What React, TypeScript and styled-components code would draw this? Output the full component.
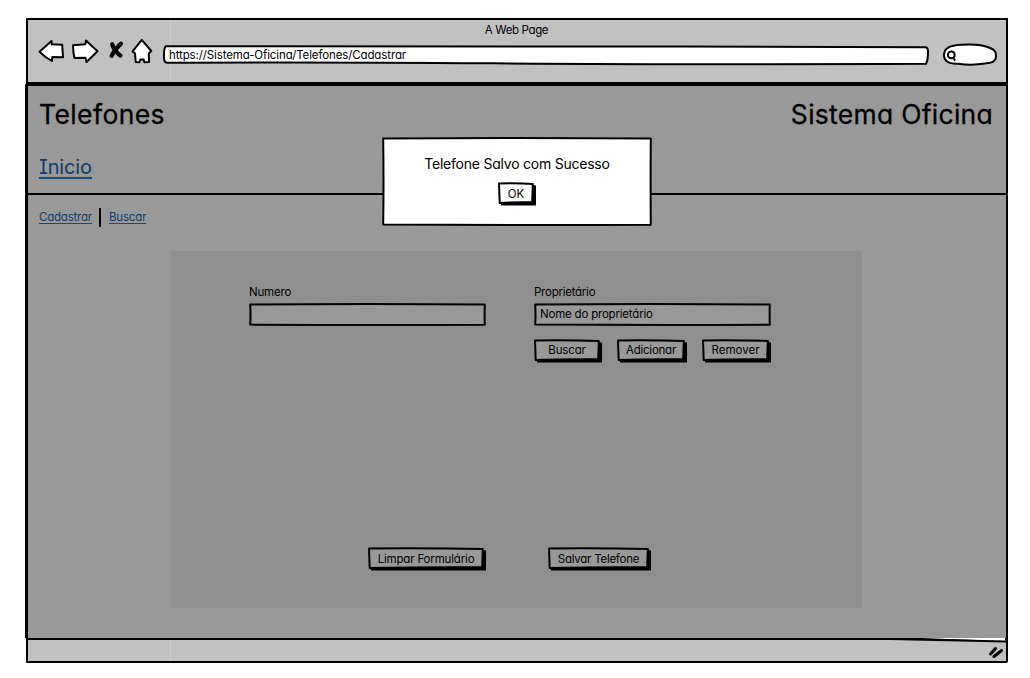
import React from "react";
import styled, { createGlobalStyle } from "styled-components";

const GlobalStyle = createGlobalStyle`
  * { box-sizing: border-box; }
  body { margin: 0; background: #fff; }
  button, input { font: inherit; color: inherit; letter-spacing: inherit; }
`;

const Stage = styled.div`
  width: 1030px;
  height: 678px;
  padding: 18px 22px 15px 25px;
  overflow: hidden;
  background: #fff;
  color: #000;
  font: 400 12px/16px Inter, "Liberation Sans", sans-serif;
  font-feature-settings: "cv11" 1, "cv08" 0;
`;

const Browser = styled.div`
  position: relative;
  display: flex;
  flex-direction: column;
  height: 645px;
`;

const Chrome = styled.header`
  flex: none;
  height: 66px;
  margin: 0 0 0 1px;
  border: 2px solid #000;
  background: linear-gradient(90deg, transparent 142px, #cdcdcd 142px, #cdcdcd 143px, transparent 143px), #c1c1c1;
`;

const WindowTitle = styled.div`
  height: 18px;
  padding-top: 2px;
  padding-right: 1px;
  text-align: center;
  font-size: 11.5px;
  letter-spacing: -0.36px;
`;

const Toolbar = styled.div`
  display: flex;
  align-items: flex-start;
  padding-left: 9px;
`;

const NavIcons = styled.svg`
  flex: none;
  width: 118px;
  height: 32px;
`;

const AddressBar = styled.div`
  position: relative;
  flex: none;
  width: 767px;
  height: 21px;
  margin: 7px 12px 0 8px;
  padding: 2px 6px;
  font-size: 11.5px;
  letter-spacing: -0.12px;
  white-space: nowrap;
`;

const SearchIcon = styled.svg`
  flex: none;
  width: 56px;
  height: 25px;
  margin-top: 4px;
`;

const FrameSvg = styled.svg`
  position: absolute;
  inset: 0;
  width: 100%;
  height: 100%;
  overflow: visible;
`;

const FrameContent = styled.span`
  position: relative;
`;

const Hero = styled.section`
  flex: none;
  height: 111px;
  border: 2px solid #000;
  border-left-width: 3px;
  border-radius: 1px;
  background: #999;
  padding: 12px 13px 0 11px;
`;

const TitleRow = styled.div`
  display: flex;
  justify-content: space-between;
`;

const Title = styled.h1<{ $spacing: number }>`
  margin: 0;
  font-weight: 400;
  font-size: 26.5px;
  line-height: 32px;
  letter-spacing: ${(p) => p.$spacing}px;
  -webkit-text-stroke: 0.3px #000;
`;

const HomeLink = styled.a`
  display: inline-block;
  margin-top: 24px;
  border-bottom: 2px solid #174a78;
  color: #0d3c69;
  font-size: 20px;
  line-height: 26px;
  height: 25px;
  letter-spacing: -0.15px;
  font-feature-settings: "cv11" 1, "cv08" 1;
`;

const Body = styled.main`
  flex: 1;
  padding: 13px 0 0 11px;
  border: solid #000;
  border-width: 0 2px 0 3px;
  background: #999;
`;

const SubNav = styled.nav`
  display: flex;
  height: 19px;
`;

const SubLink = styled.a<{ $spacing: number }>`
  height: 15px;
  margin-top: 1px;
  border-bottom: 1px solid #174a78;
  color: #0d3c69;
  font-size: 11.5px;
  letter-spacing: ${(p) => p.$spacing}px;
`;

const Divider = styled.span`
  width: 2px;
  height: 19px;
  margin: 0 8px 0 7px;
  background: #000;
`;

const Form = styled.form`
  display: flex;
  flex-direction: column;
  justify-content: space-between;
  width: 691px;
  height: 357px;
  margin: 24px 0 0 132px;
  padding: 33px 91px 37px 78px;
  background: #8f8f8f;
`;

const Fields = styled.div`
  display: grid;
  grid-template-columns: 237px 237px;
  column-gap: 48px;
`;

const FieldLabel = styled.label<{ $spacing: number }>`
  display: block;
  height: 19px;
  font-size: 11.5px;
  letter-spacing: ${(p) => p.$spacing}px;
`;

const FieldBox = styled.div`
  position: relative;
  height: 23px;
  padding: 3px 6px;
  font-size: 11.5px;
  letter-spacing: -0.2px;
`;

const ButtonRow = styled.div`
  display: flex;
  gap: 15px;
  margin-top: 13px;
`;

const Actions = styled.div`
  display: flex;
  gap: 62px;
  padding-left: 119px;
`;

const SketchButton = styled.button<{ $width: number; $spacing: number; $drop: number }>`
  position: relative;
  flex: none;
  width: ${(p) => p.$width}px;
  height: 24px;
  padding: ${(p) => p.$drop}px 2px ${(p) => 3 - p.$drop}px 0;
  border: 0;
  background: transparent;
  font-size: 11.5px;
  line-height: 18px;
  letter-spacing: ${(p) => p.$spacing}px;
  white-space: nowrap;
`;

const Footer = styled.footer`
  position: relative;
  flex: none;
  height: 25px;
  margin-left: 1px;
  border: 2px solid #000;
  border-radius: 0 0 2px 1px;
  background: linear-gradient(90deg, transparent 142px, #cdcdcd 142px, #cdcdcd 143px, transparent 143px), #c1c1c1;
`;

const FooterSketch = styled.svg`
  position: absolute;
  right: -2px;
  top: -3px;
  width: 180px;
  height: 24px;
`;

const Dialog = styled.div`
  position: absolute;
  left: 357px;
  top: 119px;
  width: 270px;
  height: 89px;
  display: flex;
  flex-direction: column;
  align-items: center;
  padding-top: 17px;
`;

const Message = styled.p`
  position: relative;
  margin: 0 0 9px;
  font-size: 14px;
  line-height: 19px;
  letter-spacing: -0.23px;
  white-space: nowrap;
`;

function Frame({ w, h, fill }: { w: number; h: number; fill: string }) {
  return (
    <FrameSvg viewBox={`0 0 ${w} ${h}`} aria-hidden="true">
      <path
        d={`M1.2 1.6 Q${w * 0.5} .6 ${w - 1.2} 1.6 Q${w - 1.6} ${h * 0.5} ${w - 1.2} ${h - 1.2} Q${w * 0.5} ${h - 0.6} 1.2 ${h - 1.4} Q1.8 ${h * 0.5} 1.2 1.6Z`}
        fill={fill}
        stroke="#000"
        strokeWidth="2"
        strokeLinejoin="round"
      />
    </FrameSvg>
  );
}

interface PushButtonProps {
  width: number;
  spacing?: number;
  drop?: number;
  fill?: string;
  children: React.ReactNode;
}

function PushButton({ width: w, spacing = 0, drop = 0, fill = "#999", children }: PushButtonProps) {
  return (
    <SketchButton type="button" $width={w} $spacing={spacing} $drop={drop}>
      <FrameSvg viewBox={`0 0 ${w} 24`} aria-hidden="true">
        <path d={`M3 20H${w - 4}L${w - 3.5} 3L${w} 3.5V23.5H3Z`} />
        <path
          d={`M1 1.4Q${w / 2} .9 ${w - 3.2} 1.9L${w - 3.8} 20.3Q${w / 2} 19.8 1.7 21Z`}
          fill={fill}
          stroke="#000"
          strokeWidth="2"
          strokeLinejoin="round"
        />
      </FrameSvg>
      <FrameContent>{children}</FrameContent>
    </SketchButton>
  );
}

export default function App() {
  return (
    <>
      <GlobalStyle />
      <Stage>
        <Browser>
          <Chrome>
            <WindowTitle>A Web Page</WindowTitle>
            <Toolbar>
              <NavIcons viewBox="37 38 118 32" fill="#fff" stroke="#000" strokeWidth="2" strokeLinejoin="round">
                <path d="M39.5 51.8 51.5 41 51.8 44.3 62.2 44.7 63 57.3 52.3 57 52 61 45.5 57Z" />
                <path d="M73 45.3 85.3 44.3 86 40.5 97.5 51.3 86.5 62 85.5 57.8 74.5 58 73.5 53Z" />
                <g fill="none" strokeWidth="4.2" strokeLinecap="round">
                  <path d="M112.2 44.2Q114 51 120.4 55.5" />
                  <path d="M121 43.7Q116 48 111.6 55.8" />
                </g>
                <path d="M141.8 39.8 151.3 51 148.8 53.4 149 62 144.4 62.3 143.6 59.6 140.2 59.6 139.5 62.3 135.7 62 135 53.4 132.5 51.4Z" />
              </NavIcons>
              <AddressBar>
                <FrameSvg viewBox="0 0 767 21" aria-hidden="true">
                  <path
                    d="M3 1.2Q280 .8 520 1.5T763 2.2Q765.5 3 765 9Q765 15 763 18.8Q520 19.7 330 18.3T4 17.8Q.5 17.5 1 10Q1 2 3 1.2Z"
                    fill="#fff"
                    stroke="#000"
                    strokeWidth="2"
                  />
                </FrameSvg>
                <FrameContent>https://Sistema-Oficina/Telefones/Cadastrar</FrameContent>
              </AddressBar>
              <SearchIcon viewBox="942 42 56 25" fill="none" stroke="#000" strokeWidth="2">
                <path
                  fill="#fff"
                  d="M944 56C943.5 47 951 45.5 961 44.8C971 44 982 44.5 989 47.5C996 50 996 53 996 56C996 62 991 63 985 63.5C976 65 967 65 958 63.7C950 64 944.5 62 944 56Z"
                />
                <circle cx="951.3" cy="54.9" r="3.4" />
                <path d="m953 57.5 2.2 3.1" />
              </SearchIcon>
            </Toolbar>
          </Chrome>

          <Hero>
            <TitleRow>
              <Title $spacing={0.4}>Telefones</Title>
              <Title $spacing={0.27}>Sistema Oficina</Title>
            </TitleRow>
            <HomeLink>Inicio</HomeLink>
          </Hero>

          <Body>
            <SubNav>
              <SubLink $spacing={-0.22}>Cadastrar</SubLink>
              <Divider />
              <SubLink $spacing={-0.15}>Buscar</SubLink>
            </SubNav>
            <Form>
              <Fields>
                <div>
                  <FieldLabel $spacing={-0.2}>Numero</FieldLabel>
                  <FieldBox>
                    <Frame w={237} h={23} fill="#999" />
                  </FieldBox>
                </div>
                <div>
                  <FieldLabel $spacing={-0.25}>Proprietário</FieldLabel>
                  <FieldBox>
                    <Frame w={237} h={23} fill="#999" />
                    <FrameContent>Nome do proprietário</FrameContent>
                  </FieldBox>
                  <ButtonRow>
                    <PushButton width={68} spacing={-0.15}>Buscar</PushButton>
                    <PushButton width={70} spacing={-0.25}>Adicionar</PushButton>
                    <PushButton width={69}>Remover</PushButton>
                  </ButtonRow>
                </div>
              </Fields>
              <Actions>
                <PushButton width={118} spacing={-0.17} drop={1}>Limpar Formulário</PushButton>
                <PushButton width={103} spacing={-0.25} drop={1}>Salvar Telefone</PushButton>
              </Actions>
            </Form>
          </Body>

          <Footer>
            <FooterSketch viewBox="828 637 180 24" aria-hidden="true">
              <path d="M920 638 1005 638V641Z" fill="#fff" />
              <path d="M890 639 1006 641.5" stroke="#000" strokeWidth="2" />
              <g stroke="#000" strokeWidth="3" strokeLinecap="round">
                <path d="M990.5 654 995.5 648.5" />
                <path d="M994 656.5 1001.5 650.5" />
              </g>
            </FooterSketch>
          </Footer>

          <Dialog role="dialog">
            <Frame w={270} h={89} fill="#fff" />
            <Message>Telefone Salvo com Sucesso</Message>
            <PushButton width={38} fill="#fff" drop={1}>
              OK
            </PushButton>
          </Dialog>
        </Browser>
      </Stage>
    </>
  );
}
